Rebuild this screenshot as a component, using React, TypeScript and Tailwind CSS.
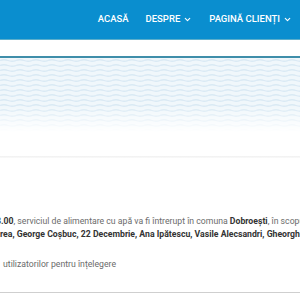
import React from 'react';
import { ChevronDown } from 'lucide-react';

const navItems = [
  { label: 'Acasă', dropdown: false },
  { label: 'Despre', dropdown: true },
  { label: 'Pagină clienți', dropdown: true },
];

const Waves: React.FC = () => (
  <svg className="block w-full h-full" xmlns="http://www.w3.org/2000/svg">
    <defs>
      <pattern id="wave" width="16" height="5" patternUnits="userSpaceOnUse">
        <path d="M0 2.5 Q4 1 8 2.5 T16 2.5" fill="none" stroke="#d9e9f4" strokeWidth="1.3" />
      </pattern>
      <linearGradient id="fade" x1="0" y1="0" x2="0" y2="1">
        <stop offset="0" stopColor="#fff" stopOpacity="1" />
        <stop offset="0.65" stopColor="#fff" stopOpacity="1" />
        <stop offset="1" stopColor="#fff" stopOpacity="0" />
      </linearGradient>
      <mask id="fadeMask">
        <rect width="100%" height="100%" fill="url(#fade)" />
      </mask>
    </defs>
    <g mask="url(#fadeMask)">
      <rect width="100%" height="100%" fill="#f0f7fb" />
      <rect width="100%" height="100%" fill="url(#wave)" />
    </g>
  </svg>
);

const App: React.FC = () => {
  return (
    <div className="w-[300px] h-[300px] overflow-hidden bg-white font-['Roboto',sans-serif]">
      {/* top nav */}
      <nav className="h-[40px] bg-[#0a8ecf] flex items-center justify-end pr-[8px] gap-[17px] border-b border-[#5aaecb]">
        {navItems.map(item => (
          <a key={item.label} className="flex items-center gap-[3px] text-white text-[9.5px] font-medium uppercase">
            {item.label}
            {item.dropdown && <ChevronDown size={9} strokeWidth={3} />}
          </a>
        ))}
      </nav>

      {/* breadcrumb strip */}
      <div className="h-[18px] bg-white border-b-2 border-[#3f8eaa]"></div>

      {/* title band with waves */}
      <div className="h-[74px]">
        <Waves />
      </div>

      <div className="h-[24px]"></div>
      <div className="h-[2px] bg-gradient-to-b from-[#f0f0f0] to-[#fafafa]"></div>

      {/* article body */}
      <div className="pt-[57px] text-[8.7px] leading-[13px] text-[#6b6b6b] whitespace-nowrap">
        <p className="-ml-[4px]">
          <b className="text-[#333]">3.00</b>, serviciul de alimentare cu apă va fi întrerupt în comuna <b className="text-[#333]">Dobroești</b>, în scopul
        </p>
        <p className="font-bold text-[#333]">
          rea, George Coșbuc, 22 Decembrie, Ana Ipătescu, Vasile Alecsandri, Gheorghe
        </p>
        <p className="mt-[17px] pl-[3px]">utilizatorilor pentru înțelegere</p>
        <div className="mt-[21px] h-px bg-[#cfcfcf]"></div>
      </div>
    </div>
  );
};

export default App;
